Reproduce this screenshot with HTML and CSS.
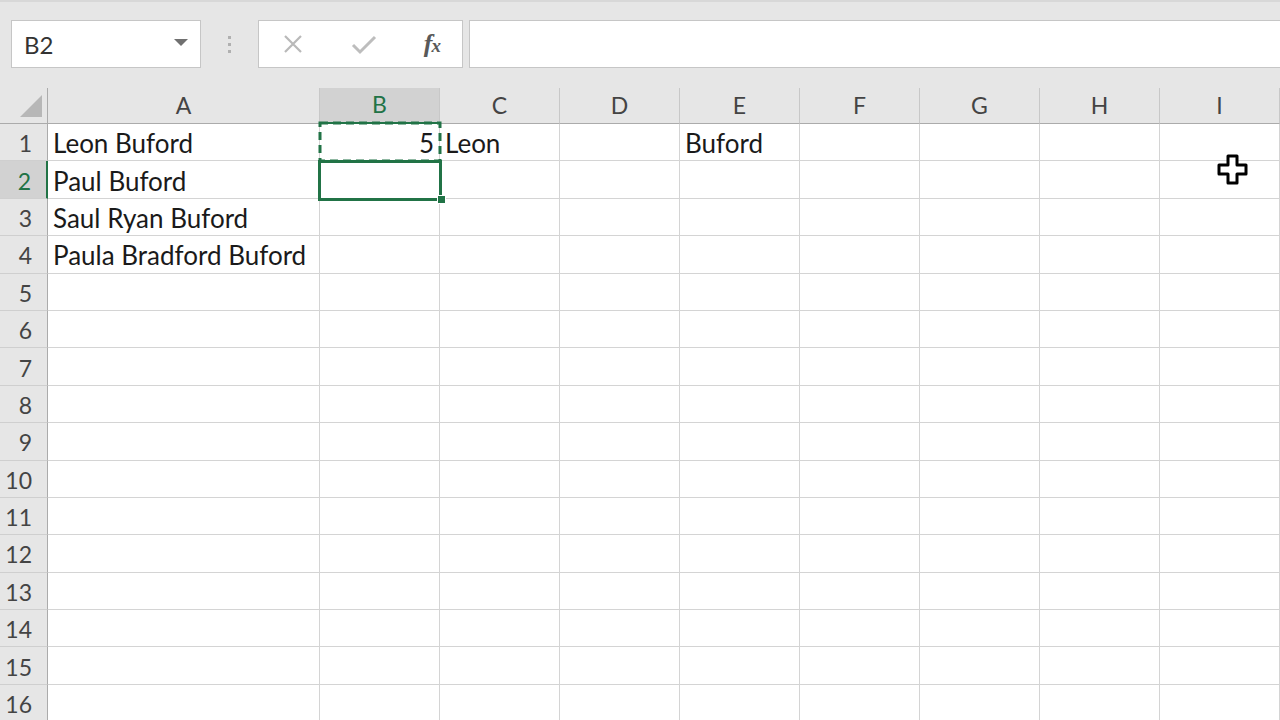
FILE: index.html
```html
<!DOCTYPE html>
<html lang="en">
<head>
  <meta charset="UTF-8">
  <title>Book1 - Excel</title>
  <link rel="stylesheet" href="styles.css">
</head>
<body>
  <div class="toolbar">
    <div class="name-box">
      <span class="name-text">B2</span>
      <span class="name-arrow"></span>
    </div>
    <div class="grip"><i></i><i></i><i></i></div>
    <div class="fx-box">
      <svg class="fx-icon" width="22" height="22" viewBox="0 0 22 22">
        <path d="M3 3 L19 19 M19 3 L3 19" stroke="#b9b9b9" stroke-width="2.2" fill="none"/>
      </svg>
      <svg class="fx-icon" width="26" height="22" viewBox="0 0 26 22">
        <path d="M2 12 L9 19 L24 4" stroke="#bdbdbd" stroke-width="3" fill="none"/>
      </svg>
      <span class="fx-text"><span>f</span><span class="fx-x">x</span></span>
    </div>
    <div class="formula-box"></div>
  </div>

  <div class="sheet">
    <div class="grid">
      <div class="corner"><span class="corner-tri"></span></div>
      <div class="col-head">A</div>
      <div class="col-head active">B</div>
      <div class="col-head">C</div>
      <div class="col-head">D</div>
      <div class="col-head">E</div>
      <div class="col-head">F</div>
      <div class="col-head">G</div>
      <div class="col-head">H</div>
      <div class="col-head">I</div>

      <div class="row-head">1</div>
      <div class="cell">Leon Buford</div>
      <div class="cell num">5</div>
      <div class="cell">Leon</div>
      <div class="cell"></div>
      <div class="cell">Buford</div>
      <div class="cell"></div><div class="cell"></div><div class="cell"></div><div class="cell"></div>

      <div class="row-head active">2</div>
      <div class="cell">Paul Buford</div>
      <div class="cell"></div><div class="cell"></div><div class="cell"></div><div class="cell"></div>
      <div class="cell"></div><div class="cell"></div><div class="cell"></div><div class="cell"></div>

      <div class="row-head">3</div>
      <div class="cell">Saul Ryan Buford</div>
      <div class="cell"></div><div class="cell"></div><div class="cell"></div><div class="cell"></div>
      <div class="cell"></div><div class="cell"></div><div class="cell"></div><div class="cell"></div>

      <div class="row-head">4</div>
      <div class="cell">Paula Bradford Buford</div>
      <div class="cell"></div><div class="cell"></div><div class="cell"></div><div class="cell"></div>
      <div class="cell"></div><div class="cell"></div><div class="cell"></div><div class="cell"></div>
    </div>
    <div class="grid" id="empty-rows"></div>

    <svg class="copy-marquee" width="124" height="42" viewBox="0 0 124 42">
      <rect x="2" y="2" width="120" height="38" fill="none" stroke="#217346" stroke-width="3" stroke-dasharray="8 5"/>
    </svg>
    <div class="active-cell"></div>
    <div class="fill-handle"></div>
  </div>

  <svg class="cursor" width="34" height="34" viewBox="0 0 34 34">
    <path d="M12 3 H21 V12 H30 V21 H21 V30 H12 V21 H3 V12 H12 Z" fill="#fff" stroke="#000" stroke-width="3" stroke-linejoin="round"/>
  </svg>

  <script>
    // rows 5..16 are empty, build them instead of typing them out
    const emptyRows = document.getElementById('empty-rows');
    for (let r = 5; r <= 16; r++) {
      const head = document.createElement('div');
      head.className = 'row-head';
      head.textContent = r;
      emptyRows.appendChild(head);
      for (let c = 0; c < 9; c++) {
        const cell = document.createElement('div');
        cell.className = 'cell';
        emptyRows.appendChild(cell);
      }
    }
  </script>
</body>
</html>
```

FILE: styles.css
```css
:root {
  --chrome-bg: #e6e6e6;
  --head-bg: #e6e6e6;
  --head-active: #d2d2d2;
  --grid-line: #d4d4d4;
  --excel-green: #217346;
  --text: #1a1a1a;
}

* {
  box-sizing: border-box;
}

body {
  margin: 0;
  width: 1280px;
  height: 720px;
  overflow: hidden;
  background: #fff;
  font-family: Lato, "Open Sans", sans-serif;
  color: var(--text);
  position: relative;
}

/* formula bar */
.toolbar {
  height: 88px;
  background: var(--chrome-bg);
  border-top: 2px solid #d8d8d8;
  display: flex;
  align-items: flex-start;
  padding: 18px 0 0 11px;
}

.name-box {
  width: 190px;
  height: 48px;
  background: #fff;
  border: 1px solid #c6c6c6;
  display: flex;
  align-items: center;
  justify-content: space-between;
  padding: 0 12px 0 12px;
}

.name-text {
  font-size: 24px;
  color: #333;
}

.name-arrow {
  width: 0;
  height: 0;
  border-left: 7px solid transparent;
  border-right: 7px solid transparent;
  border-top: 7px solid #707070;
  margin-top: -4px;
}

.grip {
  width: 57px;
  height: 48px;
  display: flex;
  flex-direction: column;
  align-items: center;
  justify-content: center;
  gap: 4px;
}

.grip i {
  width: 3px;
  height: 3px;
  background: #b0b0b0;
}

.fx-box {
  width: 205px;
  height: 48px;
  background: #fff;
  border: 1px solid #c6c6c6;
  display: flex;
  align-items: center;
  padding: 0 22px 0 23px;
  justify-content: space-between;
}

.fx-text {
  font-family: "Liberation Serif", serif;
  font-style: italic;
  font-weight: bold;
  font-size: 26px;
  color: #595959;
  letter-spacing: -1px;
}

.fx-x {
  font-size: 19px;
}

.formula-box {
  flex: 1;
  height: 48px;
  margin-left: 6px;
  background: #fff;
  border: 1px solid #c6c6c6;
  border-right: none;
}

/* sheet */
.sheet {
  position: relative;
}

.grid {
  display: grid;
  grid-template-columns: 48px 272px repeat(7, 120px) 120px;
  grid-auto-rows: 37.4px;
}

.grid:first-child {
  grid-template-rows: 36px;
}

.corner {
  background: var(--head-bg);
  border-right: 1px solid #ababab;
  border-bottom: 1px solid #ababab;
  position: relative;
}

.corner-tri {
  position: absolute;
  right: 5px;
  bottom: 6px;
  width: 0;
  height: 0;
  border-left: 22px solid transparent;
  border-bottom: 22px solid #b7b7b7;
}

.col-head {
  background: var(--head-bg);
  border-right: 1px solid #c8c8c8;
  border-bottom: 1px solid #ababab;
  display: flex;
  align-items: center;
  justify-content: center;
  font-size: 23px;
  color: #444;
  padding-bottom: 2px;
}

.col-head.active {
  background: var(--head-active);
  color: var(--excel-green);
  border-bottom: 2px solid var(--excel-green);
}

.row-head {
  background: var(--head-bg);
  border-right: 1px solid #ababab;
  border-bottom: 1px solid #cfcfcf;
  display: flex;
  align-items: center;
  justify-content: flex-end;
  padding: 2px 15px 0 0;
  font-size: 23px;
  color: #444;
}

.row-head.active {
  background: var(--head-active);
  color: var(--excel-green);
  border-right: 2px solid var(--excel-green);
}

.cell {
  border-right: 1px solid var(--grid-line);
  border-bottom: 1px solid var(--grid-line);
  display: flex;
  align-items: center;
  padding: 2px 5px 0 5px;
  font-size: 26px;
  white-space: nowrap;
  overflow: visible;
}

.cell.num {
  justify-content: flex-end;
}

/* selection overlays */
.copy-marquee {
  position: absolute;
  left: 318px;
  top: 33px;
}

.active-cell {
  position: absolute;
  left: 318px;
  top: 72px;
  width: 124px;
  height: 41px;
  border: 3px solid var(--excel-green);
}

.fill-handle {
  position: absolute;
  left: 437px;
  top: 107px;
  width: 9px;
  height: 9px;
  background: var(--excel-green);
  border: 1px solid #fff;
}

.cursor {
  position: absolute;
  left: 1216px;
  top: 153px;
}
```
